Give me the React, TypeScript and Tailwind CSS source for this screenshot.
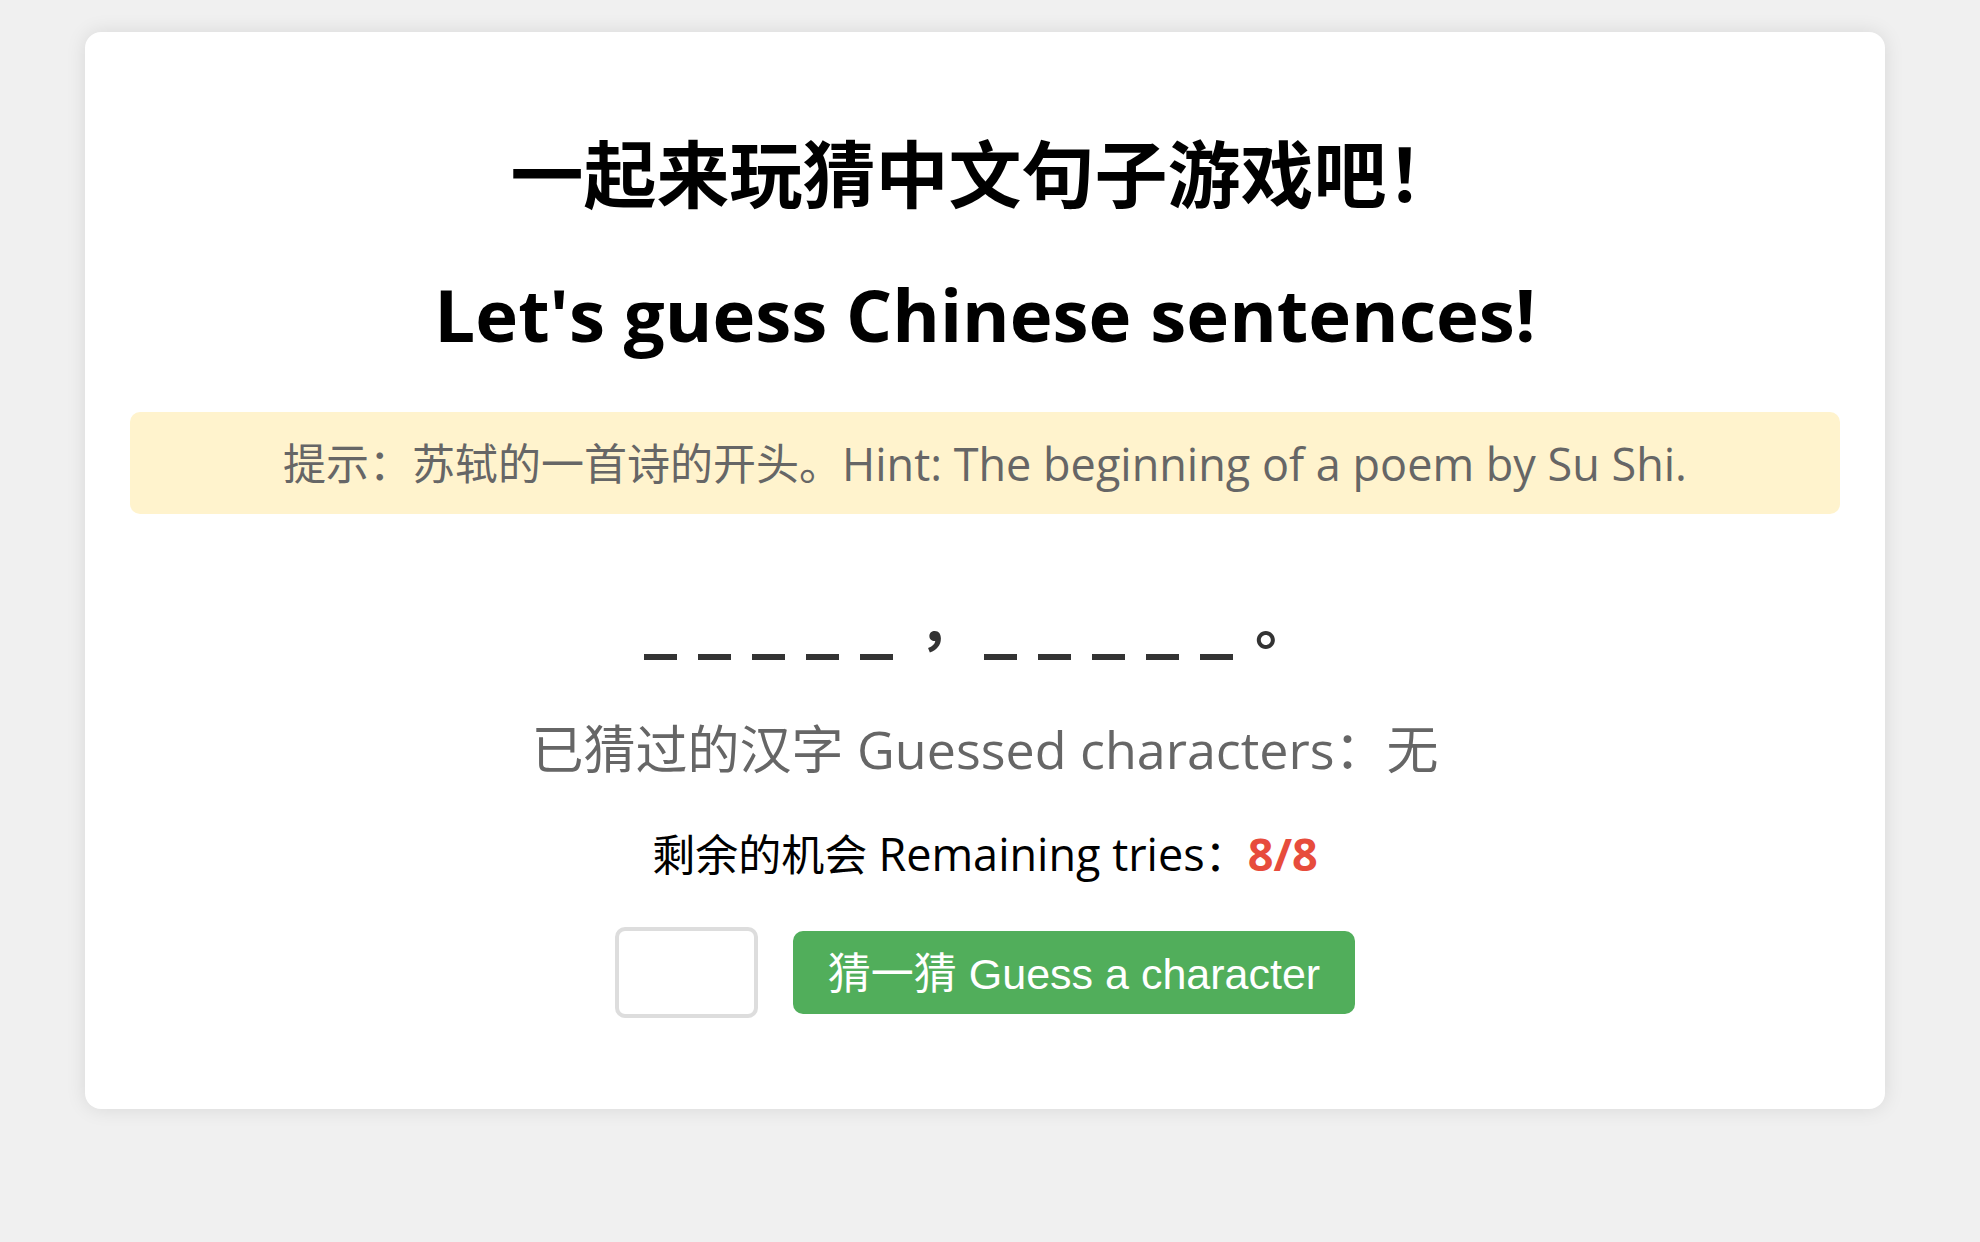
const sans = "font-['Open_Sans','Noto_Sans_CJK_SC',sans-serif]";

function Blank() {
  return (
    <span className="inline-block w-[33px] overflow-visible font-['DejaVu_Sans',sans-serif] font-bold">
      _
    </span>
  );
}

export default function App() {
  const blanks = [0, 1, 2, 3, 4];
  return (
    <div className={`min-h-screen bg-[#f0f0f0] pt-[32px] pb-[134px] ${sans}`}>
      <div className="ml-[85px] w-[1800px] rounded-[16px] bg-white px-[45px] pt-[102px] pb-[91px] shadow-[0_0_20px_rgba(0,0,0,0.1)]">
        <h1 className="text-center text-[73px] leading-[73px] font-bold text-black font-['Noto_Sans_CJK_SC',sans-serif]">
          一起来玩猜中文句子游戏吧！
        </h1>
        <h2 className="mt-[70px] text-center text-[72.5px] leading-[74px] font-bold text-black">
          Let's guess Chinese sentences!
        </h2>

        <div className="mt-[61px] flex h-[102px] items-center justify-center rounded-[10px] bg-[#fff3cd] text-[43px] leading-[43px] text-[#666]">
          提示：苏轼的一首诗的开头。<span className="text-[45px]">Hint: The beginning of a poem by Su Shi.</span>
        </div>

        <div className="mt-[75px] flex h-[66px] items-baseline justify-center text-[66px] leading-[66px] text-[#333]">
          <div className="flex gap-[21px]">
            {blanks.map((i) => (
              <Blank key={i} />
            ))}
          </div>
          <span className="w-[91px] pl-[26px] text-[56px] leading-none font-bold font-['Noto_Sans_CJK_SC',sans-serif]">
            ，
          </span>
          <div className="flex gap-[21px]">
            {blanks.map((i) => (
              <Blank key={i} />
            ))}
          </div>
          <span className="w-[93px] pl-[22px] text-[56px] leading-none font-bold font-['Noto_Sans_CJK_SC',sans-serif]">
            。
          </span>
        </div>

        <p className="mt-[68px] text-center text-[52px] leading-[52px] text-[#666]">
          已猜过的汉字 Guessed characters：无
        </p>

        <p className="mt-[57px] text-center text-[43px] leading-[43px] text-black">
          剩余的机会 <span className="text-[45px]">Remaining tries</span>：
          <span className="text-[45px] font-bold text-[#e74c3c]">8/8</span>
        </p>

        <div className="mt-[51px] flex items-center justify-center gap-[35px]">
          <input
            type="text"
            maxLength={1}
            className="h-[91px] w-[143px] rounded-[10px] border-[4px] border-[#ddd] bg-white text-center text-[43px] outline-none"
          />
          <button className="h-[83px] rounded-[10px] bg-[#51ae5b] px-[35px] pt-[4px] text-[43px] leading-[43px] text-white font-['Liberation_Sans','Noto_Sans_CJK_SC',sans-serif]">
            猜一猜 Guess a character
          </button>
        </div>
      </div>
    </div>
  );
}
